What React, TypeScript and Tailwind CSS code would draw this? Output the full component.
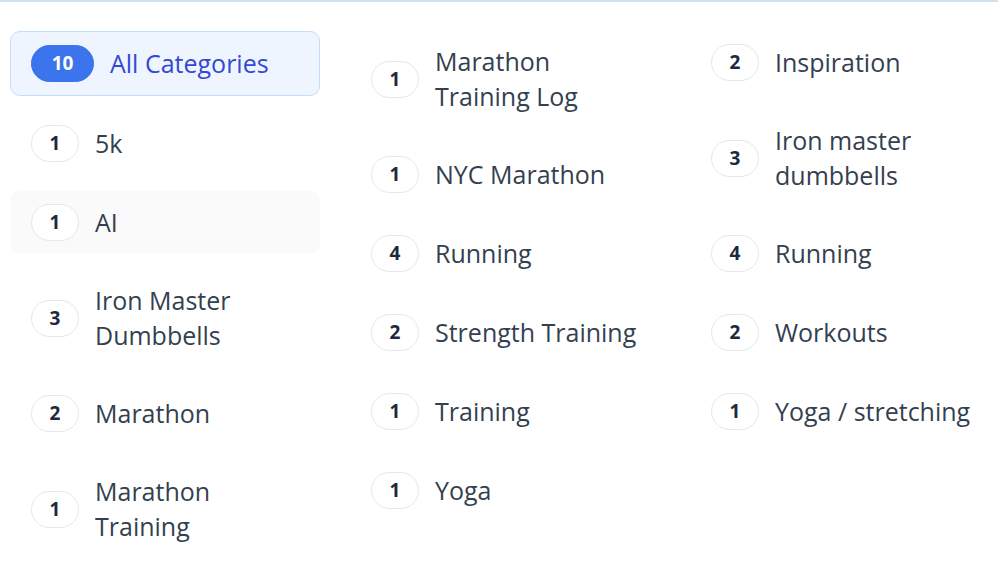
import React from "react";

type Cat = { count: number; name: string; active?: boolean; hover?: boolean };

const columns: Cat[][] = [
  [
    { count: 10, name: "All Categories", active: true },
    { count: 1, name: "5k" },
    { count: 1, name: "AI", hover: true },
    { count: 3, name: "Iron Master Dumbbells" },
    { count: 2, name: "Marathon" },
    { count: 1, name: "Marathon Training" },
  ],
  [
    { count: 1, name: "Marathon Training Log" },
    { count: 1, name: "NYC Marathon" },
    { count: 4, name: "Running" },
    { count: 2, name: "Strength Training" },
    { count: 1, name: "Training" },
    { count: 1, name: "Yoga" },
  ],
  [
    { count: 2, name: "Inspiration" },
    { count: 3, name: "Iron master dumbbells" },
    { count: 4, name: "Running" },
    { count: 2, name: "Workouts" },
    { count: 1, name: "Yoga / stretching" },
  ],
];

const CategoryItem = ({ cat, last }: { cat: Cat; last: boolean }) => {
  const box = cat.active
    ? "bg-[#eef5ff] border-[#c6dcfb] py-[13px]"
    : cat.hover
    ? "bg-[#fafafa] border-transparent py-[12px]"
    : "bg-transparent border-transparent py-[12px]";
  return (
    <div
      className={`flex items-center gap-4 rounded-[10px] border pl-5 ${
        last ? "pr-0" : "pr-4"
      } ${box}`}
    >
      <span
        className={`flex h-[37px] shrink-0 items-center justify-center rounded-full border text-[19px] font-bold ${
          cat.active
            ? "w-[63px] bg-[#3b74ec] border-[#3b74ec] text-white"
            : "w-12 bg-white border-[#e5e7eb] text-[#1e293b]"
        }`}
      >
        {cat.count}
      </span>
      <span
        className={`min-w-0 flex-1 text-[25px] leading-[35px] ${
          cat.active ? "text-[#3348d4]" : "text-[#343f50]"
        }`}
      >
        {cat.name}
      </span>
    </div>
  );
};

export default function App() {
  return (
    <div className="min-h-screen bg-white font-['Open_Sans',sans-serif]">
      <div className="h-[2px] bg-[#cfe1ef]" />
      <div className="grid grid-cols-[310px_310px_1fr] gap-x-[30px] pl-[10px] pt-[29px]">
        {columns.map((col, i) => (
          <div key={i} className="flex flex-col gap-4">
            {col.map((cat) => (
              <CategoryItem key={cat.name} cat={cat} last={i === 2} />
            ))}
          </div>
        ))}
      </div>
    </div>
  );
}
